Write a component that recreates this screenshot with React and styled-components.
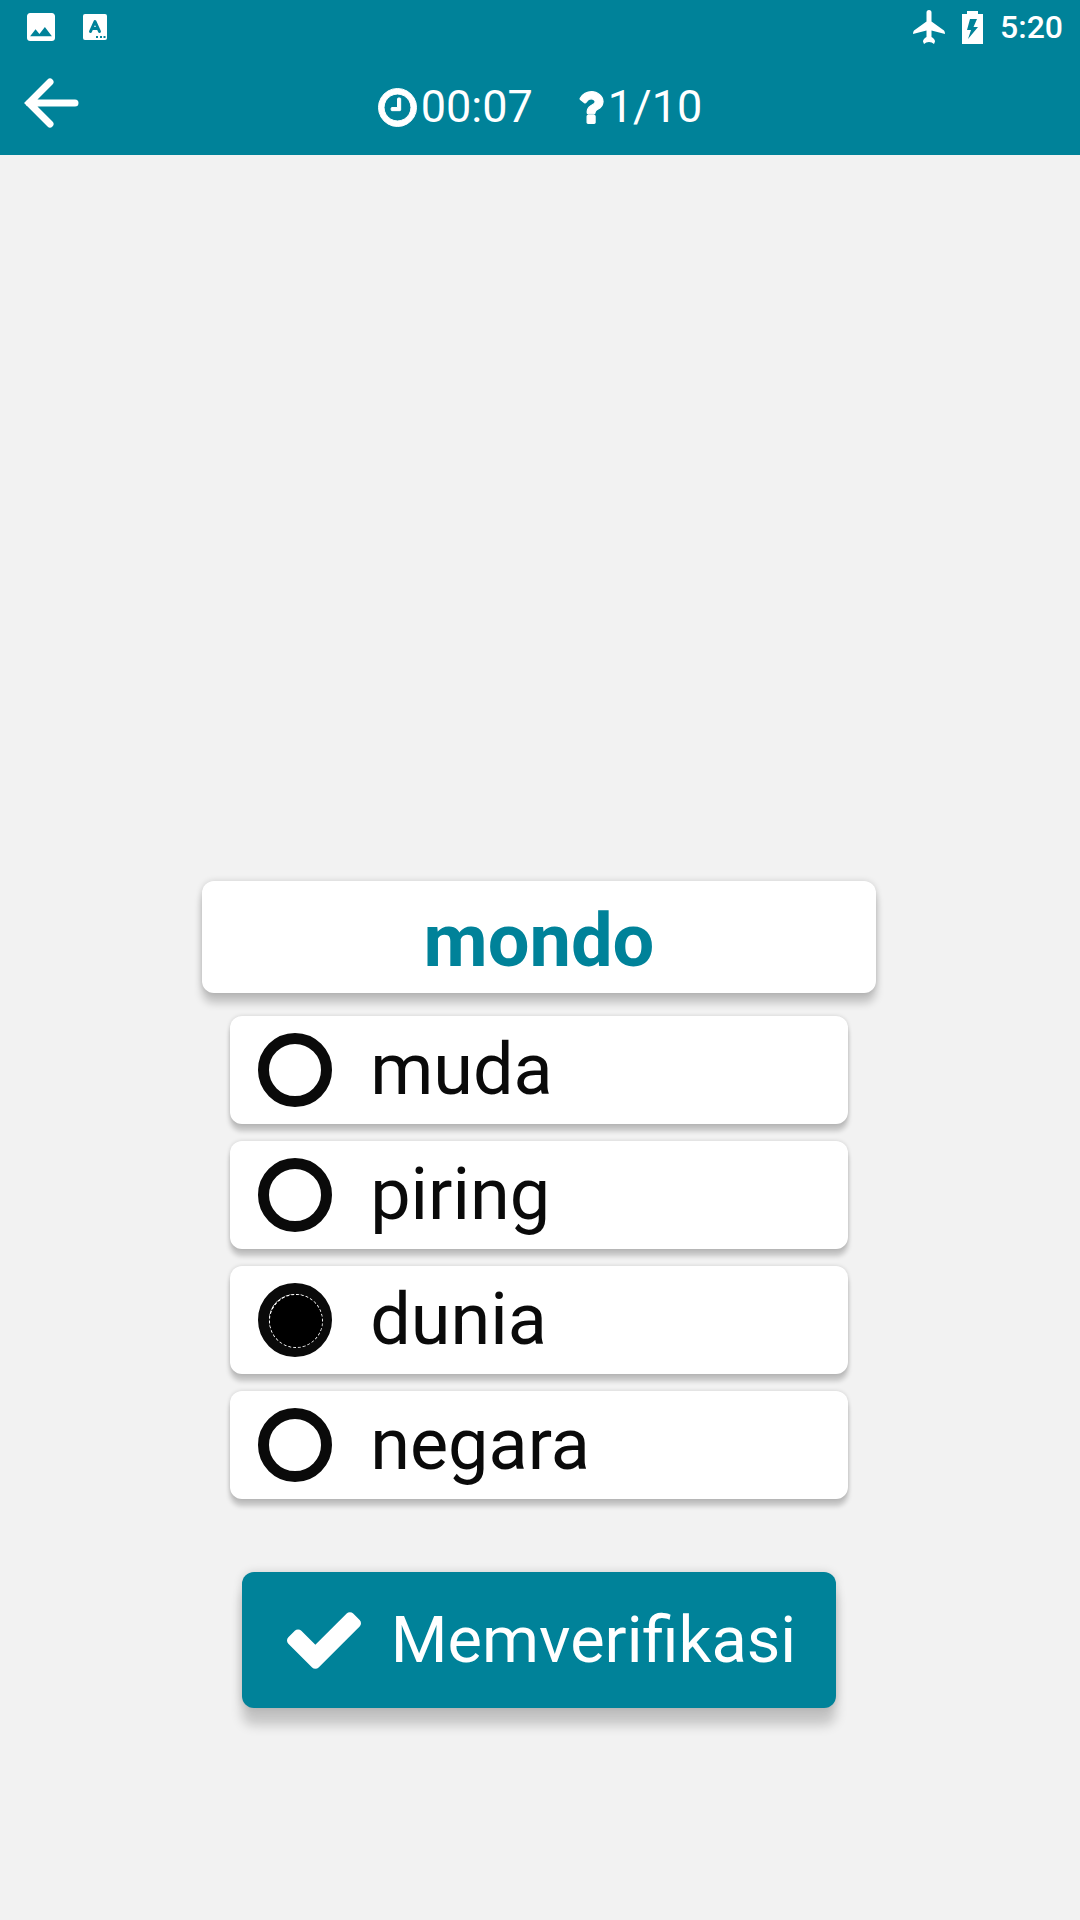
import React from "react";
import styled, { createGlobalStyle } from "styled-components";

const TEAL = "#008299";

const GlobalStyle = createGlobalStyle`
  * {
    box-sizing: border-box;
  }

  body {
    margin: 0;
    background: #f2f2f2;
    font-family: Roboto, "Noto Sans", sans-serif;
  }
`;

const Screen = styled.div`
  min-height: 100vh;
  display: flex;
  flex-direction: column;
`;

const Header = styled.header`
  background: ${TEAL};
  color: white;
`;

const StatusBar = styled.div`
  height: 54px;
  padding: 0 17px 0 27px;
  display: flex;
  align-items: center;
  justify-content: space-between;
`;

const StatusGroup = styled.div`
  display: flex;
  align-items: center;
  gap: ${({ gap }) => gap}px;
`;

const Clock = styled.span`
  font-size: 32px;
  line-height: 56px;
  font-weight: 500;
`;

const Toolbar = styled.div`
  height: 101px;
  padding: 0 24px;
  display: grid;
  grid-template-columns: 1fr auto 1fr;
  align-items: start;
`;

const BackButton = styled.button`
  justify-self: start;
  padding: 24px 0 0;
  border: 0;
  background: none;
  color: inherit;
  line-height: 0;
  cursor: pointer;
`;

const Stats = styled.div`
  display: flex;
  gap: 46px;
  padding-top: 26px;
`;

const Stat = styled.span`
  display: flex;
  align-items: center;
  gap: 4px;
  font-size: 45px;
  line-height: 54px;
`;

const Quiz = styled.form`
  flex: 1;
  padding: 0 2px 212px 0;
  display: flex;
  flex-direction: column;
  align-items: center;
  justify-content: flex-end;
`;

const Question = styled.h1`
  width: 62.5%;
  margin: 0 0 23px;
  padding: 8px 0 0;
  border-radius: 12px;
  background: white;
  color: ${TEAL};
  font-size: 74px;
  line-height: 104px;
  font-weight: 700;
  text-align: center;
  box-shadow: 0 10px 8px rgba(0, 0, 0, 0.2), 0 0 6px rgba(0, 0, 0, 0.15);
`;

const Options = styled.fieldset`
  width: 57.3%;
  margin: 0 0 73px;
  padding: 0;
  border: 0;
  display: flex;
  flex-direction: column;
  gap: 17px;
`;

const Option = styled.label`
  height: 108px;
  padding: 0 28px;
  display: flex;
  align-items: center;
  gap: 38px;
  border-radius: 12px;
  background: white;
  color: #0a0a0a;
  font-size: 72px;
  line-height: 106px;
  box-shadow: 0 7px 5px rgba(0, 0, 0, 0.2), 0 0 4px rgba(0, 0, 0, 0.14);
  cursor: pointer;
`;

const Radio = styled.input`
  appearance: none;
  flex: none;
  width: 74px;
  height: 74px;
  margin: 0;
  border: 11px solid #0a0a0a;
  border-radius: 50%;

  &:checked::before {
    content: "";
    display: block;
    width: 52px;
    height: 52px;
    border: 1px dashed white;
    border-radius: 50%;
    background: black;
  }
`;

const VerifyButton = styled.button`
  height: 136px;
  padding: 0 40px 0 45px;
  display: flex;
  align-items: center;
  gap: 30px;
  border: 0;
  border-radius: 12px;
  background: ${TEAL};
  color: white;
  font-family: inherit;
  font-size: 65px;
  line-height: 136px;
  box-shadow: 0 17px 12px rgba(0, 0, 0, 0.19), 0 0 10px rgba(0, 0, 0, 0.14);
  cursor: pointer;
`;

const PictureIcon = () => (
  <svg width="28" height="28" viewBox="3 3 18 18" fill="currentColor" aria-hidden="true">
    <path d="M21 19V5c0-1.1-.9-2-2-2H5c-1.1 0-2 .9-2 2v14c0 1.1.9 2 2 2h14c1.100 0 2-.9 2-2zM8.500 13.500l2.500 3.010L14.500 12l4.500 6H5l3.500-4.500z" />
  </svg>
);

const LetterIcon = () => (
  <svg width="24" height="26" viewBox="0 0 24 26" fill="none" aria-hidden="true">
    <rect width="24" height="26" rx="2" fill="white" />
    <path d="M7.500 17.500L12 7.500l4.500 10M9 14.500h6" stroke={TEAL} strokeWidth="3" strokeLinecap="round" strokeLinejoin="round" />
    <path d="M13 22h2v2h-2zM17 22h2v2h-2zM20.500 22h2v2h-2z" fill={TEAL} />
  </svg>
);

const PlaneIcon = () => (
  <svg width="32" height="34" viewBox="0 0 32 34" fill="currentColor" aria-hidden="true">
    <path d="M13.500 2.500a2.500 2.500 0 0 1 5 0V11.500L31 20.500q1 1 1 3.500L18.500 20.500V27q3.500 2 3.500 4.500L21 34q-2-2-5-2t-5 2l-1-2.500q0-2.500 3.500-4.500v-6.500L0 24q0-2.500 1-3.500L13.500 11.500z" />
  </svg>
);

const BatteryIcon = () => (
  <svg width="21" height="33" viewBox="0 0 21 33" fill="currentColor" aria-hidden="true">
    <path fillRule="evenodd" d="M5 0h11v3h5v30H0V3h5zM8 8L5 19h4L6 28 16 16h-4.500L15 8z" />
  </svg>
);

const BackIcon = () => (
  <svg width="55" height="50" viewBox="0 0 55 50" fill="none" aria-hidden="true">
    <path d="M26 4L5 25l21 21M5 25h46" stroke="currentColor" strokeWidth="7" strokeLinecap="round" />
  </svg>
);

const TimeIcon = () => (
  <svg width="39" height="39" viewBox="-20 108 1576 1576" fill="currentColor" stroke="currentColor" strokeWidth="40" aria-hidden="true">
    <path d="M896 544v448q0 14-9 23t-23 9H544q-14 0-23-9t-9-23v-64q0-14 9-23t23-9h224V544q0-14 9-23t23-9h64q14 0 23 9t9 23zm416 352q0-148-73-273t-198-198-273-73-273 73-198 198-73 273 73 273 198 198 273 73 273-73 198-198 73-273zm224 0q0 209-103 385.500T1153.500 1561 768 1664t-385.500-103T103 1281.500 0 896t103-385.500T382.500 231 768 128t385.500 103T1433 510.500 1536 896z" />
  </svg>
);

const QuestionIcon = () => (
  <svg width="25" height="33" viewBox="458 231 971 1330" fill="currentColor" stroke="currentColor" strokeWidth="50" aria-hidden="true">
    <path d="M1088 1256v240q0 16-12 28t-28 12H808q-16 0-28-12t-12-28v-240q0-16 12-28t28-12h240q16 0 28 12t12 28zm316-600q0 54-15.500 101t-35 76.500-55 59.500-57.500 43.500-61 35.500q-41 23-68.500 65t-27.500 67q0 17-12 32.500t-28 15.500H808q-15 0-25.500-18.500T772 1096v-45q0-83 65-156.500T980 786q59-27 84-56t25-76q0-42-46.500-74T935 548q-65 0-108 29-35 25-107 115-13 16-31 16-12 0-25-8L500 575q-13-10-15.500-25t5.500-28q160-266 464-266 80 0 161 31t146 83 106 127.500 41 158.500z" />
  </svg>
);

const CheckIcon = () => (
  <svg width="74" height="57" viewBox="121 334 1550 1188" fill="currentColor" aria-hidden="true">
    <path d="M1671 566q0 40-28 68l-724 724-136 136q-28 28-68 28t-68-28l-136-136-362-362q-28-28-28-68t28-68l136-136q28-28 68-28t68 28l294 295 656-657q28-28 68-28t68 28l136 136q28 28 28 68z" />
  </svg>
);

const answers = ["muda", "piring", "dunia", "negara"];

const App = () => {
  const [selected, setSelected] = React.useState("dunia");

  return (
    <Screen>
      <GlobalStyle />
      <Header>
        <StatusBar>
          <StatusGroup gap={28}>
            <PictureIcon />
            <LetterIcon />
          </StatusGroup>
          <StatusGroup gap={17}>
            <PlaneIcon />
            <BatteryIcon />
            <Clock>5:20</Clock>
          </StatusGroup>
        </StatusBar>
        <Toolbar>
          <BackButton type="button" aria-label="Kembali">
            <BackIcon />
          </BackButton>
          <Stats>
            <Stat>
              <TimeIcon />
              00:07
            </Stat>
            <Stat>
              <QuestionIcon />
              1/10
            </Stat>
          </Stats>
        </Toolbar>
      </Header>
      <Quiz onSubmit={(e) => e.preventDefault()}>
        <Question>mondo</Question>
        <Options>
          {answers.map((answer) => (
            <Option key={answer}>
              <Radio
                type="radio"
                name="answer"
                value={answer}
                checked={selected === answer}
                onChange={() => setSelected(answer)}
              />
              {answer}
            </Option>
          ))}
        </Options>
        <VerifyButton type="submit">
          <CheckIcon />
          Memverifikasi
        </VerifyButton>
      </Quiz>
    </Screen>
  );
};

export default App;
